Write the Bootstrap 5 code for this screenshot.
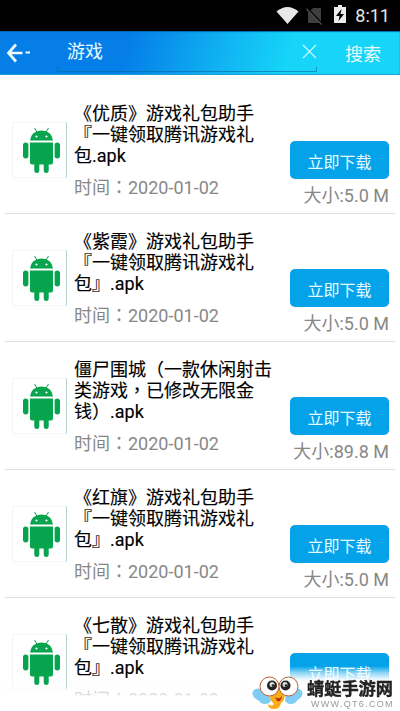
<!DOCTYPE html>
<html lang="zh-CN">
<head>
<meta charset="utf-8">
<meta name="viewport" content="width=device-width, initial-scale=1">
<title>搜索</title>
<link href="https://cdn.jsdelivr.net/npm/bootstrap@5.3.0/dist/css/bootstrap.min.css" rel="stylesheet">
<style>
body{font-family:Roboto,"Noto Sans CJK SC",sans-serif;font-size:18px;line-height:21px;height:711px;overflow:hidden;background:#fff}
.status{height:31px;background:#000;color:#e4e4e4;padding-right:10px}
.clock{font-size:18px;line-height:32px;margin-left:9px}
.topbar{height:44px;background:linear-gradient(105deg,#057ee8 0,#057ee8 32%,#10b4f2 56%,#16d5f8 72%,#16d5f8 100%);box-shadow:inset 0 1px 1px #0768a8,inset 0 -1px 1px #1aa0d8;color:#e9fbff}
.back{width:57px;padding-left:6px}
.field{width:260px;height:37px;padding:0 0 3px 10px}
.field:after{content:"";position:absolute;left:0;right:0;bottom:0;height:5px;border:1px solid #08659c99;border-top:0}
.search{padding:2px 19px 0 0}
.results{padding:11px 5px 0}
.entry{height:128px;border-bottom:1px solid #dedede;padding-left:7px}
.thumb{width:55px;height:56px;margin-top:36px;border:1px solid #eef8f4;border-right-color:#b8cfcf}
.info{margin:17px 0 0 7px;width:208px}
.title{color:#000;-webkit-text-stroke:.15px #000}
.title>div{height:21px}
.meta{color:#878787}
.date{margin-top:11px;height:21px}
.side{width:108px;margin-top:55px;padding-right:6px}
.get{width:99px;height:38px;background:#03a2e9;color:#e7fbff;font-size:16px;line-height:44px;border-radius:5px}
.size{margin-top:6px}
.tc{font-family:"Noto Sans CJK TC",sans-serif;line-height:1}
.fade-out{height:27px;background:linear-gradient(#fff0 0,#ffffffa8 8px,#ffffffc0 11px,#fff 12px)}
.fade-brand{height:45px;width:150px;background:linear-gradient(#fff0 0,#ffffff90 7px,#ffffffe8 13px,#fff 17px)}
.brand{left:255px;top:673px}
.brand-name{font:bold 17.200px/22px "Noto Sans CJK SC",sans-serif;color:#222;-webkit-text-stroke:.4px #222}
.brand-url{font:9px/11px "Liberation Sans",sans-serif;color:#999;letter-spacing:1.300px}
</style>
<script src="https://cdn.jsdelivr.net/npm/bootstrap@5.3.0/dist/js/bootstrap.bundle.min.js"></script>
</head>
<body>
<svg class="d-none">
<symbol id="droid" viewBox="0 8 53 54">
<g fill="#06a44d"><path d="M17 25.500Q18 16 28.500 15.500 39 16 40 25.500Z"/><path d="M17 27.500H40V47.500Q40 49.500 38 49.500H19Q17 49.500 17 47.500Z"/><rect x="10" y="27.500" width="5.400" height="16" rx="2.700"/><rect x="41.600" y="27.500" width="5.400" height="16" rx="2.700"/><path d="M21.300 47H26.300V56Q26 58 23.800 58T21.300 56ZM30.700 47H35.700V56Q35.400 58 33.200 58T30.700 56Z"/></g>
<path d="M21.500 13L24.500 18M35.500 13L32.500 18" stroke="#06a44d" fill="none"/><circle cx="23.500" cy="21.500" r="1.100" fill="#fff"/><circle cx="33.500" cy="21.500" r="1.100" fill="#fff"/>
</symbol>
</svg>

<div class="status d-flex justify-content-end align-items-center">
<svg width="70" height="31" viewBox="276 0 70 31"><path d="M276.500 11.500Q287.500 2.500 298.500 11.500L287.500 24Z" fill="#e8e8e8"/><path d="M308 13L313 8H321V23H308Z" fill="#3e3e3e"/><path d="M307 8.500L322 24" stroke="#000" stroke-width="2.500"/><path d="M306.500 9L321.500 24.500" stroke="#505050" stroke-width="1.300"/><path d="M334 7H338V5H342V7H346V23H334Z" fill="#ececec"/><path d="M341.500 9L336 16H339.500L338.500 21L344 14H340.500Z" fill="#000"/></svg>
<span class="clock">8:11</span>
</div>

<header class="topbar d-flex align-items-center">
<div class="back"><svg class="d-block" width="26" height="20" viewBox="0 0 26 20" fill="none" stroke="#effcff" stroke-width="2.700"><path d="M10 1.500L2.500 10 10 18.500M2.500 10H16.500"/><path d="M19.500 9.500H24" stroke-width="2"/></svg></div>
<div class="field position-relative d-flex align-items-center justify-content-between"><span>游戏</span><svg width="15" height="15" viewBox="0 0 15 15"><path d="M1 1L14 14M14 1L1 14" stroke="#c6faff" stroke-width="1.200"/></svg></div>
<span class="search ms-auto">搜索</span>
</header>

<main class="results">
<div class="entry d-flex"><svg class="thumb flex-shrink-0"><use href="#droid"/></svg><div class="info text-nowrap"><div class="title"><div>《优质》游戏礼包助手</div><div>『一键领取腾讯游戏礼</div><div>包.apk</div></div><div class="meta date">时间<span class="tc" lang="zh-TW">：</span>2020-01-02</div></div><div class="side ms-auto d-flex flex-column align-items-end text-nowrap"><a class="get text-center text-decoration-none">立即下载</a><div class="meta size">大小:5.0 M</div></div></div>
<div class="entry d-flex"><svg class="thumb flex-shrink-0"><use href="#droid"/></svg><div class="info text-nowrap"><div class="title"><div>《紫霞》游戏礼包助手</div><div>『一键领取腾讯游戏礼</div><div>包』.apk</div></div><div class="meta date">时间<span class="tc" lang="zh-TW">：</span>2020-01-02</div></div><div class="side ms-auto d-flex flex-column align-items-end text-nowrap"><a class="get text-center text-decoration-none">立即下载</a><div class="meta size">大小:5.0 M</div></div></div>
<div class="entry d-flex"><svg class="thumb flex-shrink-0"><use href="#droid"/></svg><div class="info text-nowrap"><div class="title"><div>僵尸围城<span class="tc" lang="zh-TW">（</span>一款休闲射击</div><div>类游戏<span class="tc" lang="zh-TW">，</span>已修改无限金</div><div>钱<span class="tc" lang="zh-TW">）</span>.apk</div></div><div class="meta date">时间<span class="tc" lang="zh-TW">：</span>2020-01-02</div></div><div class="side ms-auto d-flex flex-column align-items-end text-nowrap"><a class="get text-center text-decoration-none">立即下载</a><div class="meta size">大小:89.8 M</div></div></div>
<div class="entry d-flex"><svg class="thumb flex-shrink-0"><use href="#droid"/></svg><div class="info text-nowrap"><div class="title"><div>《红旗》游戏礼包助手</div><div>『一键领取腾讯游戏礼</div><div>包』.apk</div></div><div class="meta date">时间<span class="tc" lang="zh-TW">：</span>2020-01-02</div></div><div class="side ms-auto d-flex flex-column align-items-end text-nowrap"><a class="get text-center text-decoration-none">立即下载</a><div class="meta size">大小:5.0 M</div></div></div>
<div class="entry d-flex"><svg class="thumb flex-shrink-0"><use href="#droid"/></svg><div class="info text-nowrap"><div class="title"><div>《七散》游戏礼包助手</div><div>『一键领取腾讯游戏礼</div><div>包』.apk</div></div><div class="meta date">时间<span class="tc" lang="zh-TW">：</span>2020-01-02</div></div><div class="side ms-auto d-flex flex-column align-items-end text-nowrap"><a class="get text-center text-decoration-none">立即下载</a></div></div>
</main>

<div class="fade-out position-fixed bottom-0 start-0 end-0"></div>
<div class="fade-brand position-fixed bottom-0 end-0"></div>
<div class="brand position-fixed d-flex">
<svg width="48" height="36" viewBox="2 -2 48 36" overflow="visible"><g fill="#7fcdf5"><ellipse cx="8" cy="20" rx="9" ry="6" transform="rotate(20 8 20)"/><ellipse cx="41" cy="20" rx="9" ry="6" transform="rotate(-20 41 20)"/><ellipse cx="12" cy="25" rx="6" ry="4"/><ellipse cx="38" cy="25" rx="6" ry="4"/></g><path d="M18 17Q24 13 31 17 33 25 28 28 27 34 21 34 15 34 15 29 19 32 21 29 15 24 18 17Z" fill="#f9ac19"/><path d="M22 22Q26 25 29 21 28 28 24 26Z" fill="#b73512"/><circle cx="16.500" cy="11.500" r="9.500" fill="#fff" stroke="#b9602c"/><circle cx="35.500" cy="11.500" r="9.500" fill="#fff" stroke="#b9602c"/><circle cx="19" cy="10.500" r="5" fill="#222"/><circle cx="32.500" cy="10.500" r="5" fill="#222"/><circle cx="19" cy="9.500" r="2.500" fill="#ddd"/><circle cx="32" cy="9.500" r="2.500" fill="#ddd"/><circle cx="20" cy="10.500" r="1.300" fill="#222"/><circle cx="33" cy="10.500" r="1.300" fill="#222"/></svg>
<div class="text-nowrap pt-1"><div class="brand-name ms-1">蜻蜓手游网</div><div class="brand-url ms-1 ps-1">WWW.QT6.COM</div></div>
</div>
</body>
</html>
